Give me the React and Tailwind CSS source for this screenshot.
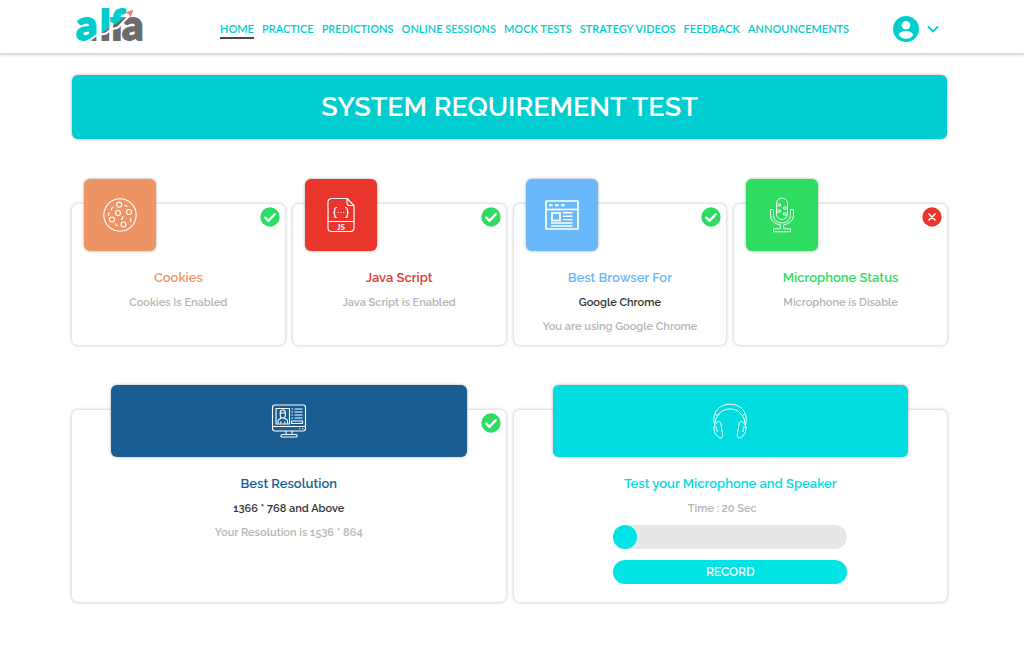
import React from 'react';

const navItems = [
  'HOME',
  'PRACTICE',
  'PREDICTIONS',
  'ONLINE SESSIONS',
  'MOCK TESTS',
  'STRATEGY VIDEOS',
  'FEEDBACK',
  'ANNOUNCEMENTS',
];

const Logo = () => (
  <svg viewBox="0 -5 72 53" className="h-[53px] w-[72px]" role="img" aria-label="alfa">
    <defs>
      <linearGradient id="logo-split" gradientUnits="userSpaceOnUse" x1="19" y1="2" x2="47" y2="44">
        <stop offset="0.5" stopColor="#00cdcd" />
        <stop offset="0.5" stopColor="#6b6b6d" />
      </linearGradient>
    </defs>
    <text
      x="0 24 34 46"
      y="35"
      fill="url(#logo-split)"
      stroke="url(#logo-split)"
      strokeWidth="1.800"
      fontFamily="Lato, 'Open Sans', sans-serif"
      fontWeight="900"
      fontSize="42"
    >
      alfa
    </text>
    <path d="M11 37 L21 30 L30 28.500 L35 24.500 L42 22.500 L53 11" fill="none" stroke="#fff" strokeWidth="2" />
    <path d="M57.500 4.500 L49.500 7.500 L53 9 L54.500 12.500 Z" fill="#f5776a" />
  </svg>
);

const CookieIcon = () => (
  <svg viewBox="0 0 36 36" className="size-9" fill="none" stroke="#fff" strokeWidth="1.100" strokeLinecap="round">
    <circle cx="18" cy="18" r="16.200" />
    <circle cx="17.200" cy="7.800" r="2.500" />
    <circle cx="27" cy="15" r="2.500" />
    <circle cx="16" cy="16" r="2.500" />
    <circle cx="10" cy="22.500" r="2.500" />
    <circle cx="21.500" cy="27.500" r="2.500" />
    <path d="M22.500 8.500c1 0 2 .3 2.700.9M9.200 12.800c.2-1.200.9-2.200 2-2.800M6.300 18.500c-.1-1 .3-2 1-2.600M20.800 19.500c.2 1.200-.4 2.400-1.400 3M28.500 24.500c.7-.9.600-2.300-.1-3.100M13.300 26.800c.4 1.200 1.400 2 2.600 2.200" />
  </svg>
);

const JsIcon = () => (
  <svg viewBox="0 0 36 36" className="size-9" fill="none" stroke="#fff" strokeWidth="1.200" strokeLinejoin="round" strokeLinecap="round">
    <path d="M24 1.500H8.500a3.500 3.500 0 0 0-3.500 3.500v26a3.500 3.500 0 0 0 3.500 3.500h19a3.500 3.500 0 0 0 3.500-3.500V8.500zM24 1.500v4.500a2.500 2.500 0 0 0 2.500 2.500H31M5 24.500h26" />
    <path d="M13.500 10.500c-1.500 0-1.800.7-1.800 2v1.500c0 .9-.3 1.300-1.200 1.500.9.200 1.200.6 1.200 1.500v1.500c0 1.300.3 2 1.800 2M22.500 10.500c1.500 0 1.800.7 1.800 2v1.500c0 .9.3 1.300 1.200 1.500-.9.200-1.200.6-1.200 1.500v1.500c0 1.300-.3 2-1.800 2" />
    <path d="M15.300 15.500h.1M18 15.500h.1M20.700 15.500h.1" />
    <text x="18" y="32.500" textAnchor="middle" fontFamily="Lato, sans-serif" fontWeight="900" fontSize="8" fill="#fff" stroke="none">JS</text>
  </svg>
);

const BrowserIcon = () => (
  <svg viewBox="0 0 36 36" className="size-9" fill="none" stroke="#fff" strokeWidth="1.700">
    <rect x="2" y="4" width="32" height="28" rx="0.500" />
    <path d="M2 12.500h32" />
    <path d="M5 8.200h3.600M11 8.200h3.600M17 8.200h3.600" strokeWidth="2" />
    <rect x="8" y="16" width="8" height="7.500" />
    <path d="M19 15.800h9.500M19 19.200h9.500M19 22.600h9.500M7 26h21.500M7 29h21.500" strokeWidth="1.400" />
  </svg>
);

const MicIcon = () => (
  <svg viewBox="0 0 36 36" className="size-9" fill="none" stroke="#fff" strokeWidth="0.900" strokeLinejoin="round">
    <rect x="12.500" y="1" width="11" height="21.500" rx="5.500" />
    <path d="M12.500 7h4v2h-4M12.500 13h4v2h-4M23.500 10h-4v2h4M23.500 16h-4v2h4" />
    <path d="M6.500 12.500h3v6a8.500 7.500 0 0 0 17 0v-6h3v6.500a11.500 9.500 0 0 1-9.800 8.800v4h6.800v3h-17v-3h6.800v-4a11.500 9.500 0 0 1-9.800-8.800z" />
  </svg>
);

const ResolutionIcon = () => (
  <svg viewBox="0 0 36 36" className="size-9" fill="none" stroke="#fff" strokeWidth="1.100" strokeLinejoin="round">
    <rect x="1.500" y="2" width="33" height="26" rx="2.500" />
    <path d="M1.500 23.500h33M28 25.800h1.300M31 25.800h1.300" />
    <rect x="5" y="5.500" width="13.500" height="15.500" />
    <path d="M7 20.500v-2.800c0-1.600 3-1.600 3.500-3.200M16.500 20.500v-2.800c0-1.600-3-1.600-3.500-3.200M9.200 9.500c0-2 1-2.500 2.600-2.500s2.600.5 2.600 2.500v2c0 2-1 3.500-2.600 3.500s-2.600-1.500-2.600-3.500zM9.200 10h5.200M9.800 20.500v-2M13.800 20.500v-2" />
    <path d="M20.500 6h1.500M23.500 6h8M20.500 9h1.500M23.500 9h8M20.500 12h1.500M23.500 12h8M20.500 15h1.500M23.500 15h8" />
    <rect x="20.500" y="18" width="11" height="2.500" />
    <path d="M15 28v3.500M21 28v3.500" />
    <rect x="10" y="31.500" width="16" height="2.500" rx="1" />
  </svg>
);

const HeadphoneIcon = () => (
  <svg viewBox="0 0 36 36" className="size-9" fill="none" stroke="#fff" strokeWidth="1" strokeLinejoin="round">
    <path d="M2.500 22C-.5 9.500 7 1.200 18 1.200S36.500 9.500 33.500 22" />
    <path d="M6 12.500C8.500 8.500 12.500 6 18 6s9.500 2.500 12 6.500M3.300 11.500L6 12.500M32.700 11.500L30 12.500" />
    <path d="M6 12.500c-2.200 2.500-2.700 4.700-2.800 7.500M30 12.500c2.200 2.500 2.700 4.700 2.800 7.500" />
    <path d="M4.500 19.800c1-1.500 3.500-2 4.200 0l2.100 12.500c.2 2.700-2.600 3.300-4.300 1.900C3 31.500 .8 26.500 2.500 22.500zM31.500 19.800c-1-1.500-3.500-2-4.200 0l-2.100 12.500c-.2 2.700 2.600 3.300 4.300 1.900 3.500-2.700 5.700-7.700 4-11.700z" />
    <path d="M4 23c-.6 2.500 1.500 3 1 6M32 23c.6 2.500-1.500 3-1 6" />
  </svg>
);

const StatusBadge = ({ ok }) => (
  <svg
    viewBox="0 0 20 20"
    className="absolute top-[3px] right-[5px] size-5"
    role="img"
    aria-label={ok ? 'Passed' : 'Failed'}
    fill="none"
    stroke="#fff"
    strokeLinecap="round"
  >
    <circle cx="10" cy="10" r="9.700" fill={ok ? '#2edc62' : '#e9352c'} stroke="none" />
    {ok ? (
      <path d="M5.300 10.700l3.200 3.200 6.200-6.600" strokeWidth="2.400" />
    ) : (
      <path d="M7 7l6 6M13 7l-6 6" strokeWidth="1.600" />
    )}
  </svg>
);

const Card = ({ icon, tileClass, title, titleClass, status, children }) => (
  <section className="relative flex flex-col rounded-md bg-white pb-[6px] text-center shadow-[0_0_3px_1px_rgba(0,0,0,0.16)]">
    <div className={`-mt-[25px] flex h-18 items-center justify-center rounded-md shadow-[0_0_3px_rgba(0,0,0,0.35)] ${tileClass}`}>
      {icon}
    </div>
    {status !== undefined && <StatusBadge ok={status} />}
    <h2 className={`mt-[14px] text-[13px] leading-[26px] font-semibold ${titleClass}`}>{title}</h2>
    {children}
  </section>
);

const Note = ({ children }) => <p className="text-[11px] leading-6 font-semibold text-[#b5b5b5]">{children}</p>;

const Strong = ({ children }) => <p className="text-[11px] leading-6 font-semibold text-[#333333]">{children}</p>;

const App = () => {
  const progress = 24 / 234;

  return (
    <div className="min-h-screen bg-white font-['Raleway','Inter',sans-serif]">
      <header className="flex h-[53px] items-center pr-[85px] pl-[76px] shadow-[0_1px_3px_1px_rgba(0,0,0,0.18)]">
        <a href="#home">
          <Logo />
        </a>
        <nav className="mt-[7px] ml-[72px] flex gap-2 font-['Lato',sans-serif] text-[11px] leading-4 font-semibold whitespace-nowrap text-[#00cdcd]">
          {navItems.map((item, i) => (
            <a
              key={item}
              href={`#${item.toLowerCase().replace(' ', '-')}`}
              className={i === 0 ? 'border-b-2 border-[#4a4a4a]' : 'border-b-2 border-transparent'}
            >
              {item}
            </a>
          ))}
        </nav>
        <button type="button" aria-label="Account" className="mt-1 ml-auto flex items-center gap-2 text-[#00cdcd]">
          <svg viewBox="0 0 26 26" className="size-[26px]">
            <circle cx="13" cy="13" r="13" fill="currentColor" />
            <circle cx="13" cy="9.300" r="4.300" fill="#fff" />
            <path d="M5.500 19c1-2.800 4.500-4 7.500-4s6.500 1.200 7.500 4c-1.700 2.200-4.400 3.700-7.500 3.700S7.200 21.200 5.500 19z" fill="#fff" />
          </svg>
          <svg viewBox="0 0 12 12" className="size-3" fill="none" stroke="currentColor" strokeWidth="1.800">
            <path d="M1 3.500l5 5 5-5" />
          </svg>
        </button>
      </header>

      <main className="pt-[22px] pr-[77px] pb-10 pl-18">
        <h1 className="flex h-16 items-center justify-center rounded-md bg-[#00cdcf] text-[27px] font-semibold text-white shadow-[0_0_3px_rgba(0,0,0,0.35)]">
          SYSTEM REQUIREMENT TEST
        </h1>

        <div className="mt-[65px] grid grid-cols-4 gap-2">
          <Card icon={<CookieIcon />} tileClass="ml-3 w-18 bg-[#ed9464]" title="Cookies" titleClass="text-[#ed9464]" status={true}>
            <Note>Cookies Is Enabled</Note>
          </Card>
          <Card icon={<JsIcon />} tileClass="ml-3 w-18 bg-[#e9352c]" title="Java Script" titleClass="text-[#e9352c]" status={true}>
            <Note>Java Script is Enabled</Note>
          </Card>
          <Card icon={<BrowserIcon />} tileClass="ml-3 w-18 bg-[#69b8fc]" title="Best Browser For" titleClass="text-[#69b8fc]" status={true}>
            <Strong>Google Chrome</Strong>
            <Note>You are using Google Chrome</Note>
          </Card>
          <Card icon={<MicIcon />} tileClass="ml-3 w-18 bg-[#2edc62]" title="Microphone Status" titleClass="text-[#2edc62]" status={false}>
            <Note>Microphone is Disable</Note>
          </Card>
        </div>

        <div className="mt-[65px] grid grid-cols-2 gap-2">
          <Card icon={<ResolutionIcon />} tileClass="mx-[9%] bg-[#195d92]" title="Best Resolution" titleClass="text-[#195d92]" status={true}>
            <Strong>1366 * 768 and Above</Strong>
            <Note>Your Resolution is 1536 * 864</Note>
          </Card>
          <Card icon={<HeadphoneIcon />} tileClass="mx-[9%] bg-[#00dcdf]" title="Test your Microphone and Speaker" titleClass="text-[#00dcdf]">
            <div className="pr-4">
              <Note>Time : 20 Sec</Note>
            </div>
            <div className="mx-auto mt-1 mb-3 flex w-[54%] flex-col gap-[11px]">
              <div
                role="progressbar"
                aria-label="Recording progress"
                aria-valuenow={Math.round(progress * 100)}
                aria-valuemin={0}
                aria-valuemax={100}
                className="h-6 rounded-full bg-[#e7e7e7]"
              >
                <div className="h-6 rounded-full bg-[#00e4e6]" style={{ width: `${progress * 100}%` }} />
              </div>
              <button type="button" className="h-6 rounded-full bg-[#00e4e6] text-[12px] font-semibold text-white">
                RECORD
              </button>
            </div>
          </Card>
        </div>
      </main>
    </div>
  );
};

export default App;
